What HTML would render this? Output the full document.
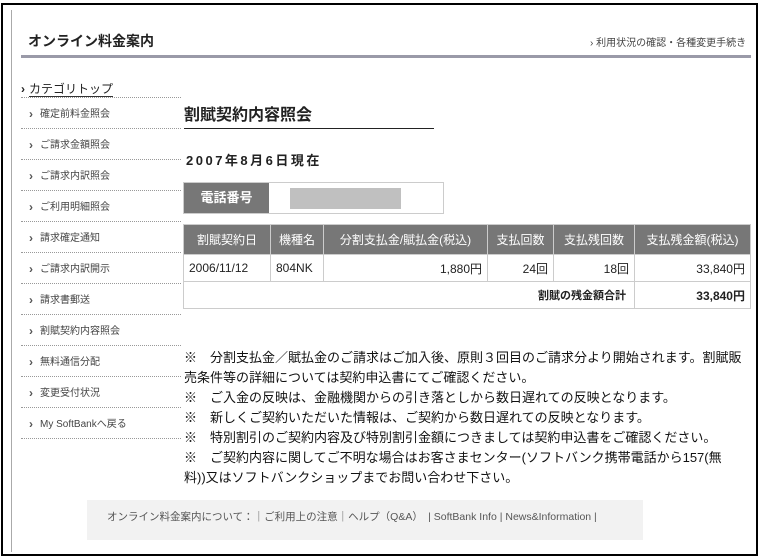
<!DOCTYPE html>
<html><head><meta charset="utf-8"><style>
*{margin:0;padding:0;box-sizing:border-box}
body{width:764px;height:560px;background:#fff;font-family:"Liberation Sans","Noto Sans CJK JP",sans-serif;position:relative;overflow:hidden;color:#222}
.a{position:absolute}
.side div{position:absolute;left:21px;width:160px;height:31px;border-bottom:1px dotted #999;font-size:10px;color:#444;padding-left:19px;line-height:33px}
.side div:before{content:"›";position:absolute;left:8px;top:0px;font-size:12px;font-weight:bold;color:#555}
table{border-collapse:collapse;font-size:12px}
td,th{border:1px solid #ccc}
th{background:#777;color:#fff;font-weight:normal;height:30px}
td{height:27px;padding:0 5px}
.r{text-align:right}
.notes{left:184px;top:348px;width:566px;font-size:13px;line-height:20px;color:#111}
</style></head><body>
<div class="a" style="left:1px;top:3px;width:757px;height:553px;border:2px solid #000"></div>
<div class="a" style="left:11px;top:10px;width:1px;height:542px;background:#aaa"></div>
<div class="a" style="left:28px;top:31px;font-size:14px;font-weight:bold;color:#222">オンライン料金案内</div>
<div class="a" style="left:590px;top:34px;font-size:10px;color:#444">› 利用状況の確認・各種変更手続き</div>
<div class="a" style="left:21px;top:55px;width:730px;height:3px;background:#9a9aa8"></div>
<div class="a" style="left:21px;top:80px;font-size:12px;color:#222;font-weight:bold">›<span style="font-weight:normal;margin-left:4px;border-bottom:1px solid #333">カテゴリトップ</span></div>
<div class="a" style="left:21px;top:97px;width:160px;border-bottom:1px dotted #999"></div>
<div class="side">
<div style="top:98px">確定前料金照会</div>
<div style="top:129px">ご請求金額照会</div>
<div style="top:160px">ご請求内訳照会</div>
<div style="top:191px">ご利用明細照会</div>
<div style="top:222px">請求確定通知</div>
<div style="top:253px">ご請求内訳開示</div>
<div style="top:284px">請求書郵送</div>
<div style="top:315px">割賦契約内容照会</div>
<div style="top:346px">無料通信分配</div>
<div style="top:377px">変更受付状況</div>
<div style="top:408px">My SoftBankへ戻る</div>
</div>
<div class="a" style="left:184px;top:101px;font-size:16px;font-weight:bold">割賦契約内容照会</div>
<div class="a" style="left:184px;top:128px;width:250px;height:1px;background:#222"></div>
<div class="a" style="left:186px;top:150px;font-size:13px;font-weight:bold;letter-spacing:2.5px">2007年8月6日現在</div>
<div class="a" style="left:183px;top:182px;width:261px;height:32px;border:1px solid #ccc"></div>
<div class="a" style="left:184px;top:183px;width:85px;height:30px;background:#777;color:#fff;font-size:13px;font-weight:bold;text-align:center;line-height:30px">電話番号</div>
<div class="a" style="left:290px;top:188px;width:111px;height:21px;background:#c0c0c0"></div>
<table class="a" style="left:183px;top:224px;width:568px">
<tr><th style="width:87px">割賦契約日</th><th style="width:53px">機種名</th><th style="width:164px">分割支払金/賦払金(税込)</th><th style="width:66px">支払回数</th><th style="width:81px">支払残回数</th><th>支払残金額(税込)</th></tr>
<tr><td>2006/11/12</td><td>804NK</td><td class="r">1,880円</td><td class="r">24回</td><td class="r">18回</td><td class="r">33,840円</td></tr>
<tr><td colspan="5" class="r" style="font-weight:bold;font-size:11px;padding-right:8px">割賦の残金額合計</td><td class="r" style="font-weight:bold">33,840円</td></tr>
</table>
<div class="a notes">※　分割支払金／賦払金のご請求はご加入後、原則３回目のご請求分より開始されます。割賦販売条件等の詳細については契約申込書にてご確認ください。<br>※　ご入金の反映は、金融機関からの引き落としから数日遅れての反映となります。<br>※　新しくご契約いただいた情報は、ご契約から数日遅れての反映となります。<br>※　特別割引のご契約内容及び特別割引金額につきましては契約申込書をご確認ください。<br>※　ご契約内容に関してご不明な場合はお客さまセンター(ソフトバンク携帯電話から157(無<br>料))又はソフトバンクショップまでお問い合わせ下さい。</div>
<div class="a" style="left:87px;top:500px;width:556px;height:40px;background:#f2f2f2;font-size:10.5px;color:#555;padding:9px 0 0 20px;white-space:nowrap">オンライン料金案内について：｜ご利用上の注意｜ヘルプ（Q&amp;A）　| SoftBank Info | News&amp;Information |</div>
</body></html>
